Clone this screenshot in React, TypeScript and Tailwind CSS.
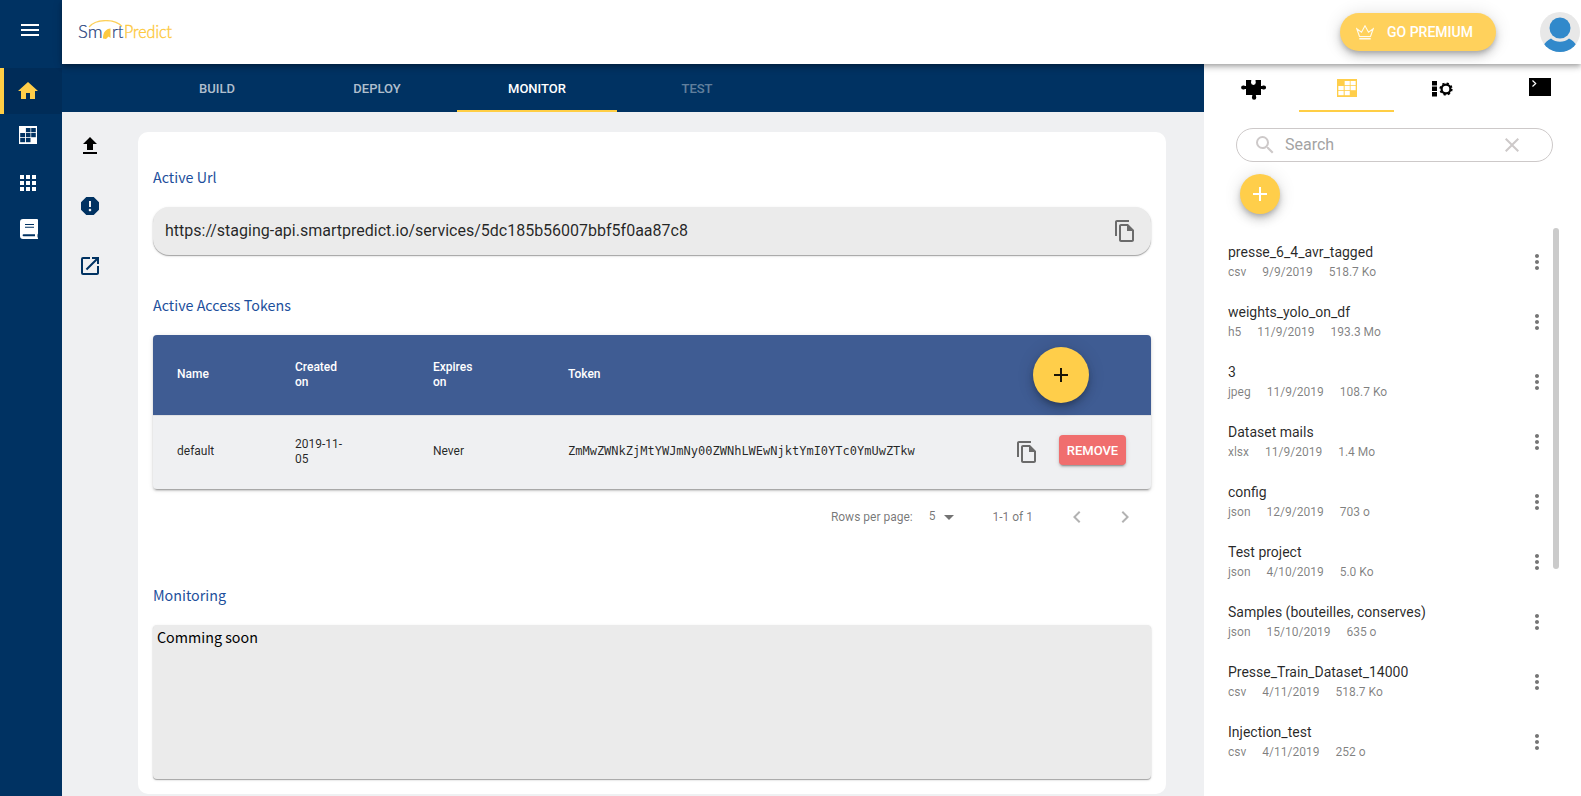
import { useState } from 'react';
import {
  MdAdd,
  MdApps,
  MdArrowDropDown,
  MdChevronLeft,
  MdChevronRight,
  MdClose,
  MdHome,
  MdMenu,
  MdMoreVert,
  MdOpenInNew,
  MdReport,
  MdSearch,
  MdUpload,
} from 'react-icons/md';

const files = [
  { name: 'presse_6_4_avr_tagged', type: 'csv', date: '9/9/2019', size: '518.7 Ko' },
  { name: 'weights_yolo_on_df', type: 'h5', date: '11/9/2019', size: '193.3 Mo' },
  { name: '3', type: 'jpeg', date: '11/9/2019', size: '108.7 Ko' },
  { name: 'Dataset mails', type: 'xlsx', date: '11/9/2019', size: '1.4 Mo' },
  { name: 'config', type: 'json', date: '12/9/2019', size: '703 o' },
  { name: 'Test project', type: 'json', date: '4/10/2019', size: '5.0 Ko' },
  { name: 'Samples (bouteilles, conserves)', type: 'json', date: '15/10/2019', size: '635 o' },
  { name: 'Presse_Train_Dataset_14000', type: 'csv', date: '4/11/2019', size: '518.7 Ko' },
  { name: 'Injection_test', type: 'csv', date: '4/11/2019', size: '252 o' },
];

function Logo() {
  return (
    <svg width="96" height="24" viewBox="0 0 96 24" className="block">
      <path d="M11 7 C18 -1.500 37 -1.500 44 6.500" fill="none" stroke="#fdd05a" strokeWidth="1.200" />
      <text x="0" y="18" fontFamily="Lato" fontWeight="300" fontSize="17" fill="#24407a" stroke="#24407a" strokeWidth="0.200" textLength="24.500" lengthAdjust="spacingAndGlyphs">Sm</text>
      <path d="M25 18.500C25 12 28 9 32.500 8.500 V18 L30.500 16.500 L28 19 Z" fill="#fdc940" />
      <text x="34" y="18" fontFamily="Lato" fontWeight="300" fontSize="17" fill="#24407a" stroke="#24407a" strokeWidth="0.200" textLength="11.500" lengthAdjust="spacingAndGlyphs">rt</text>
      <text x="46" y="18" fontFamily="Lato" fontWeight="300" fontSize="17" fill="#fdc940" stroke="#fdc940" strokeWidth="0.400" textLength="48" lengthAdjust="spacingAndGlyphs">Predict</text>
    </svg>
  );
}

function CopyIcon() {
  return (
    <svg width="24" height="24" viewBox="0 0 24 24" fill="#6b6b6b" className="block">
      <path d="M16 1H4C2.900 1 2 1.900 2 3v14h2V3h12V1zm-1 4H8C6.900 5 6 5.900 6 7v14c0 1.100.900 2 2 2h11c1.100 0 2-.900 2-2V11l-6-6zM8 21V7h6v5h5v9H8z" />
    </svg>
  );
}

function DatasetIcon({ className, cell }: { className: string; cell: string }) {
  return (
    <svg viewBox="0 0 18 18" preserveAspectRatio="none" className={className}>
      <rect width="18" height="18" fill="currentColor" />
      <g fill={cell}>
        <rect x="6.900" y="2" width="4.600" height="4.200" />
        <rect x="12.200" y="2" width="4.600" height="4.200" />
        <rect x="1.200" y="7" width="4.800" height="4.200" />
        <rect x="6.900" y="7" width="4.600" height="4.200" />
        <rect x="12.200" y="7" width="4.600" height="4.200" />
        <rect x="1.200" y="12" width="4.800" height="4.200" />
        <rect x="6.900" y="12" width="4.600" height="4.200" />
      </g>
    </svg>
  );
}

function BookIcon() {
  return (
    <svg width="18" height="20" viewBox="0 0 18 20" className="block">
      <path d="M3 0H17a1 1 0 0 1 1 1v13.500a1 1 0 0 1-.500.900v3a.8.8 0 0 1 0 1.600H3a3 3 0 0 1-3-3V3a3 3 0 0 1 3-3z" fill="#fff" />
      <path d="M5 5.500h9M5 8.200h9" stroke="#003262" strokeWidth="1.100" />
      <path d="M3.600 15.200H15v2H3.600a1 1 0 0 1 0-2z" fill="#003262" />
    </svg>
  );
}

function PuzzleIcon() {
  return (
    <svg width="26" height="21" viewBox="0 0 26 21" className="block">
      <path d="M5 1h5.200c.3 1-.2 1.500-.2 2.500a2.400 2.400 0 0 0 4.800 0c0-1-.5-1.500-.2-2.500H20v6c1 .3 1.600-.6 3-.6a2 2 0 0 1 0 4.200c-1.400 0-2-.9-3-.6v6h-5c-.5 1 .3 1.400.3 2.600a2 2 0 0 1-4.400 0c0-1.200.8-1.600.3-2.600H5v-6c-1-.3-1.600.6-2.800.6a2 2 0 0 1 0-4.200C3.400 6.400 4 7.300 5 7z" />
    </svg>
  );
}

function ModulesIcon() {
  return (
    <svg width="21" height="16" viewBox="0 0 21 16" className="block">
      <path d="M0 0h5v4.500H0zM0 5.500h5V10H0zM0 11h5v4.500H0z" />
      <circle cx="14" cy="8" r="4.400" fill="none" stroke="#000" strokeWidth="2.200" />
      <circle cx="14" cy="8" r="5.700" fill="none" stroke="#000" strokeWidth="1.800" strokeDasharray="2.238 2.238" />
    </svg>
  );
}

function TerminalIcon() {
  return (
    <svg width="22" height="18" viewBox="0 0 22 18" className="block">
      <rect width="22" height="18" />
      <path d="M3.500 2.500 6.700 5.500 3.500 8.500" fill="none" stroke="#fff" strokeWidth="1.200" />
    </svg>
  );
}

function Sidebar() {
  return (
    <nav className="flex w-[62px] shrink-0 flex-col bg-[#003262] text-white">
      <button className="mt-[18px] ml-[18px] h-6 w-6">
        <MdMenu size={24} />
      </button>
      <button className="mt-[26px] flex h-[46px] items-start border-l-4 border-[#ffce45] bg-[#002c58] pt-[11px] pl-3 text-[#ffce4a]">
        <MdHome size={24} />
      </button>
      <button className="mt-3 ml-[19px] h-[18px] w-[18px]">
        <DatasetIcon className="block h-[18px] w-[18px]" cell="#003262" />
      </button>
      <button className="mt-[27px] ml-4 h-6 w-6">
        <MdApps size={24} />
      </button>
      <button className="mt-6 ml-5 h-5 w-[18px]">
        <BookIcon />
      </button>
    </nav>
  );
}

function Header() {
  return (
    <header className="relative z-10 flex h-16 shrink-0 items-center bg-white pl-4 shadow-[0_2px_4px_-1px_rgba(0,0,0,0.2),0_4px_5px_0_rgba(0,0,0,0.14),0_1px_10px_0_rgba(0,0,0,0.12)]">
      <Logo />
      <button className="ml-auto flex h-[38px] w-[156px] items-center rounded-full bg-[#ffd15c] pl-4 font-medium text-white shadow-[0_3px_5px_-1px_rgba(0,0,0,0.2),0_6px_10px_0_rgba(0,0,0,0.14),0_1px_18px_0_rgba(0,0,0,0.12)]">
        <svg width="18" height="15" viewBox="0 0 18 15" fill="none" stroke="#fffbee" strokeWidth="1.100" className="mr-[13px]">
          <path d="M3.500 11.500.8 3.800 5.500 7.200 9 .8l3.500 6.400 4.700-3.400L14.500 11.500z" />
          <path d="M3.300 13.700h11.400" strokeWidth="1.600" />
        </svg>
        <span className="text-sm">GO PREMIUM</span>
      </button>
      <svg width="41" height="40" viewBox="0 0 41 40" className="ml-11">
        <clipPath id="avatar">
          <circle cx="20" cy="20" r="20" />
        </clipPath>
        <g clipPath="url(#avatar)">
          <rect width="41" height="40" fill="#e8e8e8" />
          <circle cx="20" cy="16" r="10.500" fill="#3189cb" />
          <path d="M2 40V35C5 31 7.500 28 11 26.500c5 4.300 13 4.300 18 0C32.500 28 35 31 38 35v5z" fill="#3189cb" />
        </g>
      </svg>
    </header>
  );
}

function Tabs() {
  return (
    <div className="flex h-12 shrink-0 bg-[#003262] pl-[75px] text-[13px] font-medium text-white">
      <button className="w-40 pt-0.5 text-white/70">BUILD</button>
      <button className="w-40 pt-0.5 text-white/70">DEPLOY</button>
      <button className="w-40 border-b-2 border-[#ffce45] pt-1">MONITOR</button>
      <button className="w-40 pt-0.5 text-white/40">TEST</button>
    </div>
  );
}

function TokenTable() {
  return (
    <>
      <div className="h-[154px] overflow-hidden rounded bg-[#eff0f2] text-xs leading-[15px] shadow-[0_3px_1px_-2px_rgba(0,0,0,0.2),0_2px_2px_0_rgba(0,0,0,0.14),0_1px_5px_0_rgba(0,0,0,0.12)]">
        <div className="flex h-20 items-center bg-[#3f5c93] pl-6 font-medium text-white">
          <div className="w-[118px] pb-px">Name</div>
          <div className="w-[138px]">Created<br />on</div>
          <div className="w-[135px]">Expires<br />on</div>
          <div className="w-[465px] pb-px">Token</div>
          <button className="flex h-14 w-14 items-center justify-center rounded-full bg-[#ffce4a] text-black/90 shadow-[0_3px_5px_-1px_rgba(0,0,0,0.2),0_6px_10px_0_rgba(0,0,0,0.14),0_1px_18px_0_rgba(0,0,0,0.12)]">
            <MdAdd size={24} />
          </button>
        </div>
        <div className="flex h-[74px] items-center border-t border-[#dfe0e3] pb-px pl-6 text-black/85">
          <div className="w-[118px] pb-px">default</div>
          <div className="w-[138px]">2019-11-<br />05</div>
          <div className="w-[135px] pb-px">Never</div>
          <div className="w-[447px] pb-px font-['DejaVu_Sans_Mono']">ZmMwZWNkZjMtYWJmNy00ZWNhLWEwNjktYmI0YTc0YmUwZTkw</div>
          <CopyIcon />
          <button className="-mt-1 ml-5 h-[30px] w-[67px] rounded bg-[#f06e6e] text-[13px] font-medium text-white shadow-[0_3px_1px_-2px_rgba(0,0,0,0.2),0_2px_2px_0_rgba(0,0,0,0.14),0_1px_5px_0_rgba(0,0,0,0.12)]">
            REMOVE
          </button>
        </div>
      </div>
      <div className="flex h-14 items-center justify-end pr-3.5 text-xs text-black/55">
        <span>Rows per page:</span>
        <span className="ml-4 pb-0.5">5</span>
        <MdArrowDropDown size={24} className="ml-0.5" />
        <span className="ml-[31px]">1-1 of 1</span>
        <MdChevronLeft size={24} className="ml-8 text-black/30" />
        <MdChevronRight size={24} className="ml-6 text-black/30" />
      </div>
    </>
  );
}

function Monitor() {
  return (
    <main className="flex min-h-0 flex-1 bg-[#eff0f2] pt-5">
      <div className="flex w-[76px] shrink-0 flex-col gap-9 pt-0.5 pl-4 text-[#003262]">
        <MdUpload size={24} className="text-black" />
        <MdReport size={24} />
        <MdOpenInNew size={24} />
      </div>
      <div className="h-[662px] w-[1028px] rounded-[10px] bg-white px-[15px] pt-[33px]">
        <h2 className="font-['Noto_Sans_CJK_SC',sans-serif] text-[14.3px] leading-6 text-[#1d4f9c]">Active Url</h2>
        <div className="mt-[18px] flex h-12 items-center justify-between rounded-2xl bg-[#ebebeb] pr-3.5 pl-3 text-base text-black/85 shadow-[0_1px_1px_0_rgba(0,0,0,0.3),0_1px_3px_0_rgba(0,0,0,0.12)]">
          <span>https://staging-api.smartpredict.io/services/5dc185b56007bbf5f0aa87c8</span>
          <CopyIcon />
        </div>
        <h2 className="mt-[38px] mb-[18px] font-['Noto_Sans_CJK_SC',sans-serif] text-[14.3px] leading-6 text-[#1d4f9c]">Active Access Tokens</h2>
        <TokenTable />
        <h2 className="mt-[38px] mb-[18px] font-['Noto_Sans_CJK_SC',sans-serif] text-[14.3px] leading-6 text-[#1d4f9c]">Monitoring</h2>
        <div className="h-[154px] rounded bg-[#ebebeb] px-1 font-['Noto_Sans_CJK_SC',sans-serif] text-[14.3px] leading-6 shadow-[0_1px_1px_0_rgba(0,0,0,0.3),0_1px_3px_0_rgba(0,0,0,0.12)]">
          Comming soon
        </div>
      </div>
    </main>
  );
}

function FilesPanel() {
  const [search, setSearch] = useState('');

  return (
    <aside className="w-[377px] shrink-0 bg-white">
      <div className="flex h-12">
        <button className="flex w-[95px] justify-center pt-[15px] pl-1">
          <PuzzleIcon />
        </button>
        <button className="flex w-[95px] justify-center border-b-2 border-[#ffce45] pt-[15px] text-[#ffce4a]">
          <DatasetIcon className="block h-[18px] w-5" cell="#fff" />
        </button>
        <button className="flex w-[95px] justify-center pt-[17px] pl-0.5">
          <ModulesIcon />
        </button>
        <button className="flex w-[92px] justify-center pt-3.5 pl-2.5">
          <TerminalIcon />
        </button>
      </div>
      <div className="mt-4 ml-8 flex h-[34px] w-[317px] items-center rounded-full border border-[#cdc9c9] pl-4 text-[#cdc9c9]">
        <MdSearch size={24} />
        <input
          className="ml-2 w-[215px] text-base text-black outline-none placeholder:text-[#a3a3a3]"
          placeholder="Search"
          value={search}
          onChange={(e) => setSearch(e.target.value)}
        />
        <MdClose size={24} />
      </div>
      <button className="mt-3 ml-9 flex h-10 w-10 items-center justify-center rounded-full bg-[#ffce4a] text-white shadow-[0_3px_5px_-1px_rgba(0,0,0,0.2),0_6px_10px_0_rgba(0,0,0,0.14),0_1px_18px_0_rgba(0,0,0,0.12)]">
        <MdAdd size={24} />
      </button>
      <div className="mt-3.5 flex">
        <ul className="w-[349px]">
          {files.map((file) => (
            <li key={file.name} className="flex h-[60px] items-center justify-between pt-2 pr-1 pl-6">
              <div>
                <div className="text-sm leading-5 text-black/85">{file.name}</div>
                <div className="flex gap-4 text-xs leading-5 text-black/50">
                  <span>{file.type}</span>
                  <span>{file.date}</span>
                  <span>{file.size}</span>
                </div>
              </div>
              <MdMoreVert size={24} className="text-[#757575]" />
            </li>
          ))}
        </ul>
        <div className="h-[341px] w-1.5 rounded-full bg-[#cbcbcb]" />
      </div>
    </aside>
  );
}

export default function App() {
  return (
    <div className="flex h-[796px] w-[1581px] overflow-hidden font-[Roboto]">
      <Sidebar />
      <div className="flex min-w-0 flex-1 flex-col">
        <Header />
        <div className="flex min-h-0 flex-1">
          <div className="flex min-w-0 flex-1 flex-col">
            <Tabs />
            <Monitor />
          </div>
          <FilesPanel />
        </div>
      </div>
    </div>
  );
}
